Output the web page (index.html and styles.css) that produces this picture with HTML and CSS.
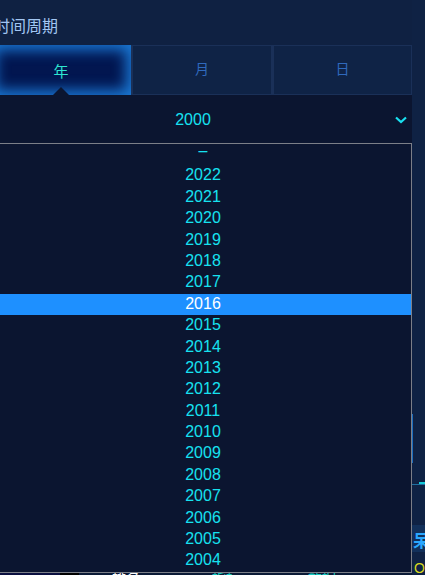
FILE: index.html
```html
<!DOCTYPE html>
<html lang="zh">
<head>
<meta charset="utf-8">
<title>时间周期</title>
<link rel="stylesheet" href="styles.css">
</head>
<body>
<div class="page">
  <div class="main">
    <div class="title">时间周期</div>
    <div class="tabs">
      <div class="tab active">年</div>
      <div class="tab">月</div>
      <div class="tab">日</div>
    </div>
    <div class="select">
      <span class="notch"></span>
      <span class="value">2000</span>
      <svg class="chev" width="12" height="8" viewBox="0 0 12 8"><path d="M1 1.5 L6 6 L11 1.5" fill="none" stroke="#19e0f0" stroke-width="2.2"/></svg>
    </div>
    <div class="under">
      <div class="row">
        <span class="c1"></span><span class="c2"></span>
        <span class="t1">排名</span><span class="t2">指标</span><span class="t3">数据</span>
      </div>
    </div>
    <ul class="list">
      <li class="dash">–</li>
      <li>2022</li>
      <li>2021</li>
      <li>2020</li>
      <li>2019</li>
      <li>2018</li>
      <li>2017</li>
      <li class="sel">2016</li>
      <li>2015</li>
      <li>2014</li>
      <li>2013</li>
      <li>2012</li>
      <li>2011</li>
      <li>2010</li>
      <li>2009</li>
      <li>2008</li>
      <li>2007</li>
      <li>2006</li>
      <li>2005</li>
      <li>2004</li>
    </ul>
  </div>
  <div class="side">
    <div class="vline"></div>
    <div class="hline"></div>
    <div class="band">呆</div>
    <div class="ring">O</div>
  </div>
</div>
</body>
</html>
```
FILE: styles.css
```css
html, body {
  margin: 0;
  padding: 0;
}
body {
  width: 425px;
  height: 575px;
  overflow: hidden;
  background: #0f2142;
  font-family: "Liberation Sans", "Noto Sans CJK SC", sans-serif;
}
.page {
  display: flex;
  margin-left: -9px;
  height: 575px;
}
.main {
  position: relative;
  width: 421px;
  flex: none;
  display: flex;
  flex-direction: column;
}
.title {
  font-family: "Noto Sans CJK SC", sans-serif;
  font-size: 16px;
  color: #a2c6f2;
  padding: 16px 0 0 3px;
  box-sizing: content-box;
  height: 11px;
  padding-bottom: 18px;
  line-height: 18px;
}
.tabs {
  display: grid;
  grid-template-columns: 140px 141px 140px;
  height: 50px;
}
.tab {
  display: flex;
  align-items: center;
  justify-content: center;
  border: 1px solid #1a3058;
  background: #0f2346;
  font-family: "Noto Sans CJK SC", sans-serif;
  font-size: 14px;
  color: #2f69bd;
  padding-bottom: 5px;
  box-sizing: border-box;
}
.tab + .tab {
  border-left-width: 2px;
}
.tab.active {
  border: none;
  background: #021650;
  box-shadow: inset 0 0 14px 5px #1a78d4;
  color: #2ee6d2;
  font-size: 15px;
  padding-bottom: 0;
  padding-top: 1px;
}
.select {
  position: relative;
  height: 48px;
  background: #0b1530;
  display: flex;
  align-items: center;
  justify-content: center;
  padding-right: 17px;
  box-sizing: border-box;
  color: #16e2f0;
  font-size: 16px;
}
.notch {
  position: absolute;
  left: 62px;
  top: -8px;
  width: 0;
  height: 0;
  border-left: 8px solid transparent;
  border-right: 8px solid transparent;
  border-bottom: 8px solid #0b1530;
}
.value {
  padding-top: 1px;
}
.chev {
  position: absolute;
  right: 5px;
  top: 21px;
}
.under {
  flex: 1;
  display: flex;
  flex-direction: column;
  justify-content: flex-end;
}
.row {
  height: 4px;
  display: flex;
  align-items: flex-start;
  background: #0b1a36;
  font-size: 14px;
  overflow: hidden;
}
.row .c1 { width: 69px; height: 4px; background: #0a1040; }
.row .c2 { width: 19px; height: 4px; background: #000; }
.row .t1 { margin-left: 33px; color: #fff; line-height: 10px; padding-top: 2px; }
.row .t2 { margin-left: 72px; color: #16c9c0; line-height: 10px; padding-top: 2px; }
.row .t3 { margin-left: 68px; color: #16c9c0; line-height: 10px; padding-top: 2px; }
.list {
  position: absolute;
  left: 3px;
  top: 143px;
  width: 418px;
  margin: 0;
  padding: 0;
  list-style: none;
  border: 1px solid #7c7f88;
  background: #0b1530;
  box-sizing: border-box;
  height: 430px;
}
.list li {
  height: 21.4px;
  box-sizing: border-box;
  line-height: 19.4px;
  padding-bottom: 2px;
  text-align: center;
  color: #16e2f0;
  font-size: 16px;
}
.list li.dash {
  line-height: 14px;
  padding-bottom: 0;
}
.list li.sel {
  background: #1e90ff;
  color: #ffffff;
}
.side {
  flex: 1;
  position: relative;
  display: flex;
  flex-direction: column;
  background: #0f2244;
}
.vline {
  margin-top: 414px;
  height: 54px;
  width: 1px;
  background: #1e6fbf;
}
.hline {
  margin-top: 21px;
  height: 1px;
  background: #1e6fa0;
  position: relative;
}
.hline::after {
  content: "";
  position: absolute;
  left: 7px;
  right: 0;
  top: -2px;
  height: 2px;
  background: #16c9d8;
}
.band {
  margin-top: 40px;
  height: 30px;
  background: #12305a;
  font-family: "Noto Sans CJK SC", sans-serif;
  font-weight: 700;
  font-size: 17px;
  line-height: 30px;
  color: #2aa8ff;
  padding-left: 1px;
  white-space: nowrap;
  overflow: hidden;
}
.ring {
  margin-top: 9px;
  padding-left: 2px;
  color: #d8d820;
  font-size: 14px;
  line-height: 14px;
}
```
